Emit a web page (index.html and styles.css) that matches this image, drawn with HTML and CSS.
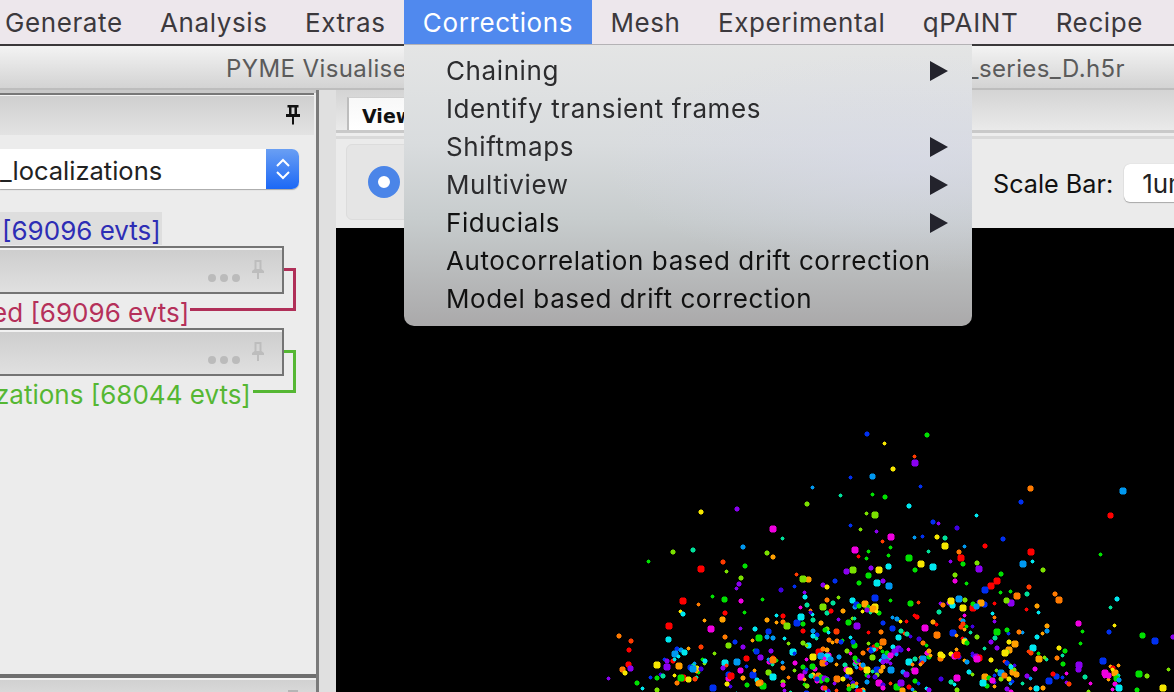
FILE: index.html
```html
<!DOCTYPE html>
<html lang="en">
<head>
  <meta charset="UTF-8">
  <title>PYME Visualiser</title>
  <link rel="stylesheet" href="styles.css">
</head>
<body>
  <nav class="menubar">
    <span class="menu-item">Generate</span>
    <span class="menu-item">Analysis</span>
    <span class="menu-item">Extras</span>
    <span class="menu-item active">Corrections</span>
    <span class="menu-item">Mesh</span>
    <span class="menu-item">Experimental</span>
    <span class="menu-item">qPAINT</span>
    <span class="menu-item">Recipe</span>
  </nav>

  <ul class="dropdown">
    <li class="drop-item sub">Chaining <svg class="arrow" viewBox="0 0 18 20"><polygon points="0,0 18,10 0,20"/></svg></li>
    <li class="drop-item">Identify transient frames</li>
    <li class="drop-item sub">Shiftmaps <svg class="arrow" viewBox="0 0 18 20"><polygon points="0,0 18,10 0,20"/></svg></li>
    <li class="drop-item sub">Multiview <svg class="arrow" viewBox="0 0 18 20"><polygon points="0,0 18,10 0,20"/></svg></li>
    <li class="drop-item sub dark">Fiducials <svg class="arrow" viewBox="0 0 18 20"><polygon points="0,0 18,10 0,20"/></svg></li>
    <li class="drop-item dark">Autocorrelation based drift correction</li>
    <li class="drop-item dark">Model based drift correction</li>
  </ul>

  <header class="titlebar">
    <span>PYME Visualiser</span>
    <span>_series_D.h5r</span>
  </header>

  <main class="main">
    <aside class="sidebar">
      <div class="panel-head">
        <svg class="pin" viewBox="0 0 14 20"><path fill-rule="evenodd" d="M1.500 0h11v2.500H11V9h3v3H8v7.500H6V12H0V9h3V2.500H1.500zM5.500 2.500V9h3V2.500z"/></svg>
      </div>
      <div class="panel-body">
        <div class="select">
          <span class="select-text">_localizations</span>
          <span class="stepper">
            <svg viewBox="0 0 16 22"><path d="M2 8l6-6 6 6M2 14l6 6 6-6"/></svg>
          </span>
        </div>
        <div class="source"><span>[69096 evts]</span></div>
        <div class="node">
          <div class="node-box">
            <span class="dots"><i></i><i></i><i></i></span>
            <svg class="pin-grey" viewBox="0 0 14 20"><path d="M3.500 1h7v9l2.500 2v2H8v6H6v-6H1v-2l2.500-2zM5.500 3v7h3V3z"/></svg>
          </div>
          <div class="output red">ed [69096 evts]</div>
          <div class="link link-red"></div>
        </div>
        <div class="node">
          <div class="node-box">
            <span class="dots"><i></i><i></i><i></i></span>
            <svg class="pin-grey" viewBox="0 0 14 20"><path d="M3.500 1h7v9l2.500 2v2H8v6H6v-6H1v-2l2.500-2zM5.500 3v7h3V3z"/></svg>
          </div>
          <div class="output green">zations [68044 evts]</div>
          <div class="link link-green"></div>
        </div>
      </div>
      <div class="panel-next"><span class="pin-stub"></span></div>
    </aside>

    <div class="gutter"></div>

    <section class="content">
      <div class="tabs">
        <div class="tab">View</div>
      </div>
      <div class="toolbar">
        <div class="group">
          <span class="radio"></span>
        </div>
        <label class="scale-label">Scale Bar:</label>
        <span class="scale-input">1um</span>
      </div>
      <canvas id="view" width="838" height="464"></canvas>
    </section>
  </main>

  <script src="dots.js"></script>
</body>
</html>
```

FILE: styles.css
```css
* {
  box-sizing: border-box;
}

html, body {
  height: 100%;
}

body {
  margin: 0;
  overflow: hidden;
  display: flex;
  flex-direction: column;
  position: relative;
  font-family: Inter, "Liberation Sans", sans-serif;
  background: #ececec;
}

/* menu bar */
.menubar {
  display: flex;
  flex: none;
  height: 46px;
  margin-left: -13.700px;
  background: #ede7ec;
  border-bottom: 2px solid #3a383a;
  font-size: 26px;
  letter-spacing: 0.6px;
  color: #3c393d;
}

.menu-item {
  height: 44px;
  line-height: 45px;
  padding: 0 18.700px;
  white-space: nowrap;
}

.menu-item.active {
  background: #5089ee;
  color: #fff;
}

/* open menu */
.dropdown {
  position: absolute;
  left: 404px;
  top: 44px;
  z-index: 5;
  width: 568px;
  height: 282px;
  margin: 0;
  padding: 6px 24px 0 42px;
  list-style: none;
  border-top: 1px solid #b4b2b5;
  border-radius: 0 0 10px 10px;
  background:
    radial-gradient(ellipse 300px 110px at 88% 42%, rgba(216, 218, 235, 0.55), rgba(216, 218, 235, 0)),
    linear-gradient(180deg, #e4e5e5 0%, #d9dcde 35%, #c7cccd 62%, #aaa9aa 100%);
  font-size: 26px;
  letter-spacing: 0.6px;
  color: #2c2c2e;
}

.drop-item {
  display: flex;
  justify-content: space-between;
  align-items: center;
  height: 38px;
  white-space: nowrap;
}

.drop-item.dark {
  color: #111;
}

.arrow {
  width: 18px;
  height: 20px;
  margin-top: 2px;
  fill: #23232c;
}

/* window title */
.titlebar {
  display: flex;
  flex: none;
  justify-content: space-between;
  align-items: center;
  height: 44px;
  padding: 2px 49px 0 226px;
  background: linear-gradient(180deg, #f3f3f3, #d3d3d3);
  border-bottom: 2px solid #bdbdbd;
  font-size: 24px;
  letter-spacing: 0.4px;
  color: #5b5b5b;
}

.main {
  display: flex;
  flex: 1;
  min-height: 0;
}

/* left panel */
.sidebar {
  display: flex;
  flex: none;
  flex-direction: column;
  width: 319px;
  padding-top: 3px;
  background: #ececec;
  border-right: 3px solid #7a7a7a;
  box-shadow: inset 0 3px 0 #c8c8c8;
}

.panel-head {
  display: flex;
  flex: none;
  justify-content: flex-end;
  align-items: center;
  height: 42px;
  margin-right: 2px;
  padding-right: 14px;
  background: linear-gradient(180deg, #cfcfcf, #e3e3e3);
  border-top: 2px solid #777;
  box-shadow: inset 0 1px 0 #f4f4f4;
}

.pin {
  width: 14px;
  height: 20px;
  fill: #111;
}

.panel-body {
  flex: 1;
  padding-top: 14px;
}

.select {
  display: flex;
  justify-content: space-between;
  align-items: center;
  width: 299px;
  height: 40px;
  background: #fff;
  border-radius: 0 7px 7px 0;
  box-shadow: 0 1px 1px #a8a8a8;
  font-size: 25.500px;
  color: #222;
}

.select-text {
  padding-top: 2px;
}

.stepper {
  display: flex;
  justify-content: center;
  align-items: center;
  width: 33px;
  height: 40px;
  background: linear-gradient(180deg, #6a9ff3, #1c68f6);
  border-radius: 0 7px 7px 0;
}

.stepper svg {
  width: 16px;
  height: 22px;
  fill: none;
  stroke: #fff;
  stroke-width: 2;
}

.source {
  width: 162px;
  height: 33px;
  margin-top: 23px;
  margin-bottom: 1px;
  padding-left: 2px;
  background: #dedede;
  font-size: 26px;
  line-height: 38px;
  color: #2d2db5;
  white-space: nowrap;
  overflow: hidden;
}

.node {
  position: relative;
  height: 82px;
}

.node-box {
  position: relative;
  z-index: 1;
  width: 284px;
  height: 48px;
  background: linear-gradient(180deg, #cdcdcd, #e0e0e0);
  border: 2px solid #747474;
  border-left: none;
  box-shadow: inset 0 2px 0 #f1f1f1;
}

.dots {
  position: absolute;
  right: 42px;
  top: 26px;
  display: flex;
  gap: 4px;
}

.dots i {
  width: 8px;
  height: 8px;
  border-radius: 50%;
  background: #bbb;
}

.pin-grey {
  position: absolute;
  right: 17px;
  top: 11px;
  width: 14px;
  height: 20px;
  fill: #bdbdbd;
}

.output {
  position: absolute;
  top: 52px;
  font-size: 26px;
  line-height: 30px;
  white-space: nowrap;
}

.output.red {
  left: -8px;
  color: #b5305a;
}

.output.green {
  left: -5px;
  color: #55b733;
}

.link {
  position: absolute;
  left: 190px;
  top: 22px;
  width: 106px;
  height: 43px;
  border: 3px solid;
  border-left: none;
}

.link-red {
  border-color: #b02f58;
}

.link-green {
  left: 253px;
  width: 43px;
  border-color: #55b733;
}

.panel-next {
  display: flex;
  flex: none;
  justify-content: flex-end;
  align-items: flex-end;
  height: 18px;
  padding-right: 18px;
  background: linear-gradient(180deg, #d0d0d0, #d8d8d8);
  border-top: 4px solid #6e6e6e;
  box-shadow: inset 0 2px 0 #f1f1f1;
}

.pin-stub {
  width: 10px;
  height: 2px;
  background: #b5b5b5;
}

.gutter {
  flex: none;
  width: 17px;
  background: #e0e0e0;
}

/* right side */
.content {
  display: flex;
  flex: 1;
  flex-direction: column;
  min-width: 0;
}

.tabs {
  flex: none;
  height: 43px;
  padding: 7px 0 0 11px;
  background: linear-gradient(180deg, #d4d4d4, #eaeaea);
  border-bottom: 3px solid #c9c9c9;
}

.tab {
  width: 80px;
  height: 33px;
  padding-left: 13px;
  background: linear-gradient(180deg, #f8f8f8, #ffffff);
  border-left: 2px solid #bdbdbd;
  border-top: 1px solid #cfcfcf;
  font-family: "DejaVu Sans", sans-serif;
  font-weight: bold;
  font-size: 19px;
  line-height: 36px;
  color: #111;
}

.toolbar {
  display: flex;
  flex: none;
  align-items: center;
  height: 95px;
  padding-left: 10px;
  background: #ebebeb;
  border-top: 3px solid #ededed;
  box-shadow: inset 0 3px 0 #d9d9d9;
}

.group {
  display: flex;
  flex: none;
  align-items: center;
  width: 200px;
  height: 76px;
  padding-left: 21px;
  background: #e5e5e5;
  border: 1px solid #dcdcdc;
  border-radius: 6px;
}

.radio {
  width: 32px;
  height: 32px;
  border: 10px solid #4b85e8;
  border-radius: 50%;
  background: #fff;
}

.scale-label {
  flex: none;
  margin-left: 447px;
  padding-top: 4px;
  font-size: 25.200px;
  color: #111;
  white-space: nowrap;
}

.scale-input {
  flex: none;
  width: 80px;
  height: 38px;
  margin: 2px 0 0 11px;
  padding-left: 18px;
  background: #fff;
  border-radius: 6px;
  box-shadow: 0 1px 1px #a8a8a8, 0 0 1px #bbb;
  font-size: 26px;
  line-height: 40px;
  color: #222;
}

#view {
  display: block;
  flex: none;
  background: #000;
}
```

FILE: dots.js
```js
// localisation events, x/y in page pixels, drawn on the black view
var colours = {
  r: "#ff0000", o: "#ff7a00", a: "#ffa000", y: "#f5e600", l: "#7be000", g: "#00e000", t: "#00e09a",
  c: "#00e8f0", z: "#0098f0", b: "#0030f0", i: "#4000e0", p: "#8a00f0", m: "#f000e0", d: "#ff3c00"
};

var points = "b867,434 y884,443 y893,469 Z872,476 b850,477 z812,487 t840,495 g872,494 g885,497 l807,504 l866,513 L875,515 " +
  "y701,512 p737,509 M773,529 t782,538 b850,525 l860,529 p876,531 M891,537 d882,541 g890,547 z743,547 l767,553 " +
  "a773,557 l673,552 t693,550 g648,561 R701,569 d723,562 g745,566 l726,571 M855,550 r858,556 g868,551 g866,558 " +
  "g888,555 C888,566 p871,568 Y879,570 L853,570 P846,571 d796,574 A808,579 L803,579 l741,578 p739,584 p736,588 " +
  "b835,581 G868,575 p823,585 y827,587 g859,583 C877,583 p883,581 Z889,586 b794,586 i781,590 p804,592 c805,597 " +
  "g712,596 G724,599 g762,599 m741,601 R683,601 o698,604 y680,611 c683,614 g744,612 r725,613 A722,619 a704,620 " +
  "R669,626 M711,629 C668,639 d631,641 o619,636 r629,650 a688,648 d701,647 b677,649 l714,653 o725,637 p740,628 " +
  "b735,642 L728,645 p743,647 a752,640 G759,638 B768,631 a767,620 c755,629 r783,616 c776,615 a776,622 o783,622 " +
  "L787,626 B797,623 g803,624 t813,620 a821,623 r803,631 z813,631 b817,635 m800,607 t807,605 o810,610 L823,607 " +
  "t827,613 t833,603 o827,600 l838,597 C852,600 B875,598 g890,600 Y875,607 g867,608 z855,607 p838,619 a843,611 " +
  "G848,622 P857,626 b883,623 g879,613 z892,617 D836,631 l827,629 c850,637 g842,640 C808,645 l788,643 c784,638 " +
  "z773,638 z767,637 l868,643 g927,435 d914,456 P915,463 b920,486 c909,506 O1030,488 Z1123,491 b1021,502 c976,515 " +
  "R1110,515 b933,522 p938,523 i957,528 b1003,539 y937,537 t945,538 z914,537 b922,536 Y945,546 z964,546 r985,546 " +
  "o959,552 R961,558 g963,564 p950,561 l977,563 P979,569 R1031,552 c1032,561 Z1023,564 l1043,570 g1100,554 t928,551 " +
  "G909,558 Y921,564 C933,567 g915,570 g1001,574 R997,581 R991,586 l955,575 m955,581 g966,583 B985,590 g1000,592 " +
  "g1010,591 O1017,596 t1027,594 d1029,587 O1059,600 o1055,594 c1117,599 t1110,607 r1026,609 a1037,606 c1038,612 " +
  "P1011,603 L1006,600 r994,603 B984,604 R973,608 Y963,608 b953,605 Z959,599 M1078,623 g1082,631 y1114,625 b1109,632 " +
  "g1080,643 G1142,635 B1155,641 p1173,637 a1047,626 z1047,631 a1042,633 c1037,637 z1022,632 o1019,632 b1008,633 g1007,630 " +
  "G997,632 t995,638 l977,637 p991,642 A1015,644 p997,648 t984,648 A1009,650 C1033,648 g1038,653 g1065,651 t1062,655 " +
  "y1059,648 o1057,658 t1046,659 g1063,664 P1079,665 B1103,661 a1118,665 l1168,669 G1139,674 l1147,676 t1085,677 " +
  "m1104,676 a1108,679 m1090,683 m1115,684 g1137,690 Y1163,688 m1112,689 l1088,691 Y657,665 P667,667 A679,666 R628,664 " +
  "O622,669 P630,668 y625,673 p608,678 g637,683 c642,688 b650,677 g657,678 R683,678 o677,683 l657,690 z694,663 l704,663 " +
  "g698,672 t696,677 C725,663 p723,668 Z737,662 R746,658 b746,666 M740,670 M728,678 a743,678 B753,675 g747,685 P760,657 " +
  "g754,650 L768,672 C773,677 G763,686 o783,668 z782,662 o788,677 l783,682 C793,652 m795,663 m800,675 y813,675 p805,672 " +
  "p827,679 O837,679 y843,679 o848,685 g852,682 z867,682 M879,683 G897,687 B877,670 a883,667 Z891,670 r861,668 t855,664 " +
  "t845,665 a836,664 O823,663 C827,657 Y813,657 R819,652 a827,650 m806,659 l847,651 m850,653 z839,657 o863,653 L872,657 " +
  "R875,648 g882,651 t889,658 c893,647 P895,652";

var ctx = document.getElementById("view").getContext("2d");

function blob(x, y, key) {
  var big = key === key.toUpperCase();
  var n = (big ? 5 : 3) + (x % 2);
  var left = x - 336 - Math.floor(n / 2);
  var top = y - 228 - Math.floor(n / 2);
  ctx.fillStyle = colours[key.toLowerCase()];
  ctx.globalAlpha = 0.5;
  ctx.fillRect(left + 1, top - 1, n - 2, n + 2);
  ctx.fillRect(left - 1, top + 1, n + 2, n - 2);
  ctx.globalAlpha = 1;
  ctx.fillRect(left, top, n, n);
}

points.split(" ").forEach(function (p) {
  var xy = p.slice(1).split(",");
  blob(+xy[0], +xy[1], p[0]);
});

// the dense part near the bottom edge
var seed = 98317;
function rnd() {
  seed = (seed * 16807) % 2147483647;
  return seed / 2147483647;
}
for (var k = 0; k < 20; k++) rnd();

var keys = "roaylgtczbipmdroaylgtczbipmdROAYGCZBPM";
function scatter(count, x0, x1, y0, y1) {
  for (var i = 0; i < count; i++) {
    var x = Math.round(x0 + rnd() * (x1 - x0));
    var y = Math.round(y0 + rnd() * (y1 - y0));
    blob(x, y, keys[Math.floor(rnd() * keys.length)]);
    // neighbours smear into short chains
    if (rnd() < 0.35) blob(x + 3, y + 2, keys[Math.floor(rnd() * keys.length)]);
  }
}

scatter(50, 800, 1000, 600, 640);
scatter(130, 800, 1040, 640, 694);
scatter(35, 660, 800, 650, 694);
scatter(20, 1000, 1120, 650, 694);
```
